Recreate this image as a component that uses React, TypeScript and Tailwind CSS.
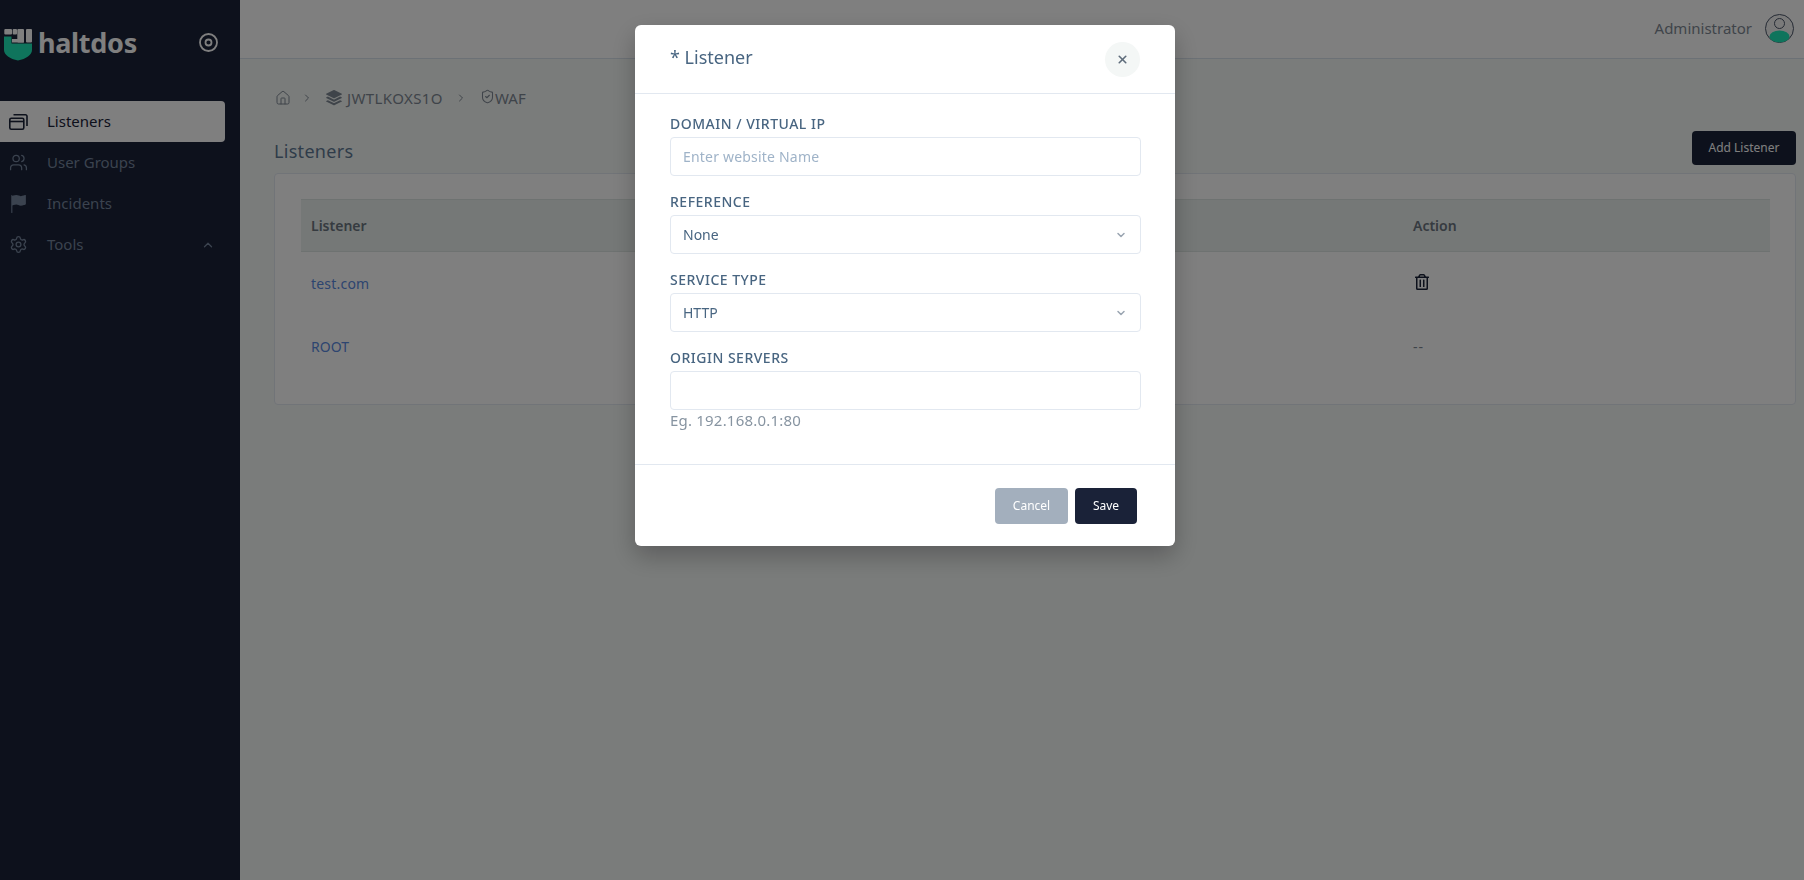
import React from "react"
import { House, ChevronRight, ChevronUp, ChevronDown, ShieldCheck, Settings, Users, X } from "lucide-react"
import { BsStack, BsFlagFill } from "react-icons/bs"
import { FaRegTrashAlt } from "react-icons/fa"

const WindowsIcon = () => (
    <svg width="19" height="16" viewBox="0 0 19 16" fill="none" stroke="currentColor" strokeWidth="1.600">
        <path d="M4.500 .8H16.500a1.500 1.500 0 0 1 1.500 1.500V12" />
        <rect x=".8" y="4.200" width="14" height="11" rx="1.500" />
        <path d="M.8 7.500H14.800" />
    </svg>
)

const NAV = [
    { label: "Listeners", icon: <WindowsIcon />, active: true },
    { label: "User Groups", icon: <Users className="w-[19px] h-[19px]" strokeWidth={1.6} /> },
    { label: "Incidents", icon: <BsFlagFill className="w-[18px] h-[18px]" /> },
    { label: "Tools", icon: <Settings className="w-[19px] h-[19px]" strokeWidth={1.7} />, caret: true },
]

const Logo = () => (
    <svg width="28" height="33" viewBox="0 0 28 33">
        <g fill="#ffffff">
            <rect x=".3" y="1" width="7.700" height="5.500" rx="1" />
            <rect x="8.700" y="1" width="4.300" height="5.500" rx="1" />
            <rect x="13.300" y="1" width="6.700" height="13.500" rx="1" />
            <rect x="22" y="1" width="6" height="13.500" rx="1" />
            <rect x="8" y="11" width="12" height="3.500" />
        </g>
        <path d="M0 8.500H7.500V15.500H28V22C28 27 22 31 14 32.500C6 31 0 27 0 22Z" fill="#1ee8b8" />
    </svg>
)

const Avatar = () => (
    <svg width="29" height="29" viewBox="0 0 29 29">
        <circle cx="14.500" cy="14.500" r="14" fill="#f5f5f5" stroke="#4a5568" strokeWidth="1" />
        <circle cx="14.500" cy="9.500" r="5" fill="none" stroke="#4a5568" strokeWidth="1" />
        <ellipse cx="14.500" cy="22.500" rx="10" ry="6" fill="#1ee8b8" />
    </svg>
)

const Label = ({ children }: { children: React.ReactNode }) => (
    <label className="block mt-[1px] text-[14px] leading-[16px] font-medium text-[#486581] tracking-[0.5px] mb-[5px]">{children}</label>
)

const SelectBox = ({ value }: { value: string }) => (
    <div className="h-[39px] rounded border border-[#e2e8f0] pl-3 pr-[13px] flex items-center justify-between text-[14px] text-[#486581]">
        {value}
        <ChevronDown className="w-[12px] h-[12px] text-[#9aa5b1]" strokeWidth={3} />
    </div>
)

export default function App() {
    return (
        <div className="relative flex h-[880px] overflow-hidden bg-[#f5f8f7] text-[14px] text-[#7f8994] font-['Noto_Sans',sans-serif]">
            {/* sidebar */}
            <aside className="w-[240px] shrink-0 bg-[#1a2238]">
                <div className="h-[101px] pl-1 pt-[28px] flex items-start relative">
                    <Logo />
                    <span className="ml-[6px] mt-[-3px] text-[27px] leading-[36px] font-bold text-white tracking-[-0.3px]">haltdos</span>
                    <svg className="absolute left-[198px] top-[32px] text-white" width="21" height="21" viewBox="0 0 21 21" fill="none" stroke="currentColor" strokeWidth="1.800">
                        <circle cx="10.500" cy="10.500" r="8.500" />
                        <circle cx="10.500" cy="10.500" r="3" />
                    </svg>
                </div>
                <nav className="flex flex-col w-[225px]">
                    {NAV.map(item => (
                        <div
                            key={item.label}
                            className={`h-[41px] flex items-center pl-[9px] pr-[10px] text-[15px] rounded-r ${item.active ? "bg-white text-[#1a2238]" : "text-[#76869e]"}`}
                        >
                            <span className="w-[38px]">{item.icon}</span>
                            <span className="flex-1 -mt-[1px]">{item.label}</span>
                            {item.caret && <ChevronUp className="w-[14px] h-[14px]" strokeWidth={2.2} />}
                        </div>
                    ))}
                </nav>
            </aside>

            {/* main */}
            <main className="flex-1 min-w-0">
                <header className="h-[59px] bg-white border-b border-[#d9e2ec] flex items-center justify-end pr-[10px] pb-[1px]">
                    <span className="text-[15px] text-[#7f8994] mr-[13px] -mt-[1px]">Administrator</span>
                    <Avatar />
                </header>
                <div className="pl-[34px] pr-2">
                    <div className="h-[16px] mt-[31px] flex items-center text-[15px] text-[#7f8994]">
                        <House className="w-[16px] h-[16px] ml-[1px]" strokeWidth={1.5} />
                        <ChevronRight className="w-[12px] h-[12px] ml-[10px]" />
                        <BsStack className="w-[16px] h-[16px] ml-[13px]" />
                        <span className="ml-[5px] tracking-[0.4px]">JWTLKOXS1O</span>
                        <ChevronRight className="w-[12px] h-[12px] ml-[12px]" />
                        <ShieldCheck className="w-[15px] h-[15px] ml-[13px] -mt-[4px]" strokeWidth={1.7} />
                        <span>WAF</span>
                    </div>
                    <div className="flex items-end justify-between mt-[25px]">
                        <h2 className="mb-[2px] text-[18px] leading-[24px] text-[#5f7894] tracking-[0.3px]">Listeners</h2>
                        <button className="w-[104px] h-[34px] rounded bg-[#1a2238] text-white text-[12px]">Add Listener</button>
                    </div>
                    <section className="mt-[8px] h-[232px] rounded border border-[#e2e8f0] bg-white pl-[26px] pr-[25px] pt-[25px]">
                        <div className="h-[53px] bg-[#eaf0ee] border-y border-[#dde5e2] flex items-center pl-[10px] font-semibold text-[#6c7681]">
                            <span className="w-[1102px]">Listener</span>
                            <span>Action</span>
                        </div>
                        <div className="h-[63px] flex items-center pl-[10px]">
                            <span className="w-[1102px] text-[#5a8ae0] tracking-[0.2px]">test.com</span>
                            <FaRegTrashAlt className="w-[14px] h-[16px] text-[#1a2238] ml-[2px] -mt-[4px]" />
                        </div>
                        <div className="h-[62px] flex items-center pl-[10px]">
                            <span className="w-[1102px] text-[#5a8ae0]">ROOT</span>
                            <span className="tracking-[1px]">--</span>
                        </div>
                    </section>
                </div>
            </main>

            {/* overlay + modal */}
            <div className="fixed inset-0 bg-black/50 flex justify-center items-start pt-[25px] pl-[6px]">
                <div className="w-[540px] h-[521px] rounded-md bg-white shadow-[0_10px_25px_rgba(0,0,0,0.25)] flex flex-col">
                    <div className="h-[69px] border-b border-[#e2e8f0] flex items-center justify-between px-[35px]">
                        <h3 className="text-[18px] text-[#486581] -mt-[3px]">* Listener</h3>
                        <button className="w-[35px] h-[35px] rounded-full bg-[#f4f7f6] flex items-center justify-center text-[#5f6c7b]">
                            <X className="w-[13px] h-[13px]" strokeWidth={3} />
                        </button>
                    </div>
                    <div className="flex-1 pl-[35px] pr-[34px] pt-[21px]">
                        <Label>DOMAIN / VIRTUAL IP</Label>
                        <input
                            placeholder="Enter website Name"
                            className="w-full h-[39px] rounded border border-[#e2e8f0] px-3 text-[14px] tracking-[0.2px] outline-none placeholder:text-[#9fb3c8]"
                        />
                        <div className="mt-[18px]">
                            <Label>REFERENCE</Label>
                            <SelectBox value="None" />
                        </div>
                        <div className="mt-[18px]">
                            <Label>SERVICE TYPE</Label>
                            <SelectBox value="HTTP" />
                        </div>
                        <div className="mt-[18px]">
                            <Label>ORIGIN SERVERS</Label>
                            <input className="w-full h-[39px] rounded border border-[#e2e8f0] px-3 outline-none" />
                            <p className="text-[15px] leading-[20px] text-[#8794a1] tracking-[0.2px]">Eg. 192.168.0.1:80</p>
                        </div>
                    </div>
                    <div className="h-[82px] border-t border-[#e2e8f0] flex items-start justify-end gap-[7px] pt-[23px] pr-[38px]">
                        <button className="w-[73px] h-[36px] rounded bg-[#a3afbd] text-white text-[12px]">Cancel</button>
                        <button className="w-[62px] h-[36px] rounded bg-[#1a2238] text-white text-[12px]">Save</button>
                    </div>
                </div>
            </div>
        </div>
    )
}
